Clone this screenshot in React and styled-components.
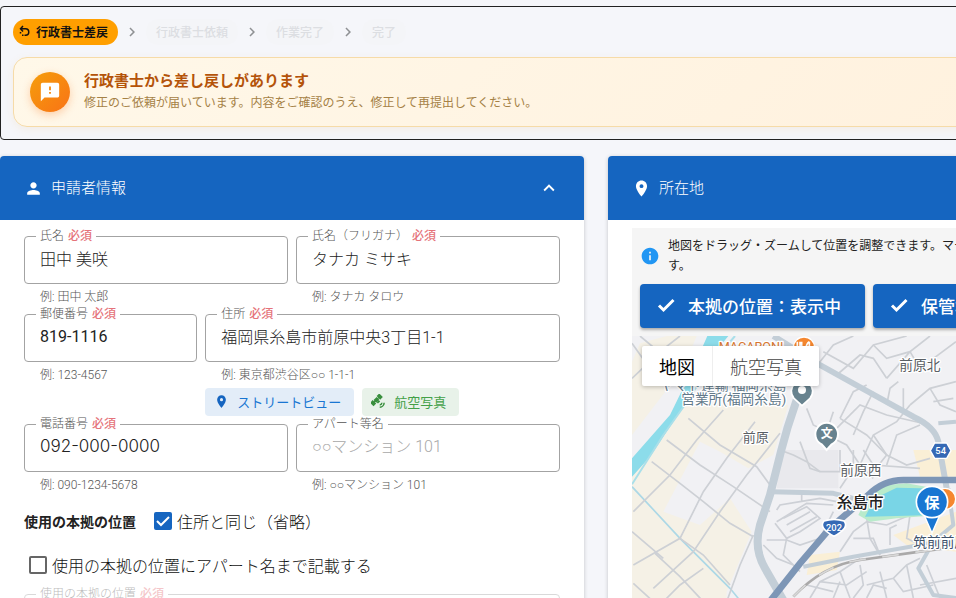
import React, { useState } from 'react'
import styled, { createGlobalStyle } from 'styled-components';
import { MdChevronRight, MdExpandLess, MdFeedback, MdInfo, MdPerson, MdPlace } from 'react-icons/md';

const GlobalStyle = createGlobalStyle`
  *{
    box-sizing:border-box;
  }
  html{
    scrollbar-width:none;
  }
  body{
    margin:0;
    background:#f5f6fa;
    color:#333;
    font-family:Roboto,"Liberation Sans","Noto Sans CJK JP",sans-serif;
    font-size:16px;
  }
  button,input,label{
    font-family:inherit;
  }
`
const Page = styled.main`
  min-width:1192px;
  padding-top:6px;
`
const StatusPanel = styled.section`
  border:1px solid #222;
  border-radius:4px;
  padding:12px;
`
const Steps = styled.ol`
  display:flex;
  align-items:center;
  gap:5px;
  margin:0 0 12px;
  padding:0;
  list-style:none;
`
const StepItem = styled.li`
  display:flex;
  align-items:center;
  gap:5px;
  color:#8f9194;
`
const Step = styled.span`
  display:flex;
  align-items:center;
  gap:6px;
  height:26px;
  padding:0 10px 2px ${props=>props.$active ? "6px" : "10px"};
  border-radius:13px;
  font-size:12px;
  font-weight:${props=>props.$active ? 700 : 500};
  color:${props=>props.$active ? "#111" : "#dcdee2"};
  background:${props=>props.$active ? "#ff9f00" : "#f4f5f8"};
`
const Alert = styled.div`
  display:flex;
  align-items:center;
  gap:14px;
  height:70px;
  padding:0 16px;
  border:1px solid #f6dba8;
  border-radius:14px;
  background:linear-gradient(135deg,#fff8e9,#fff0dc);
  box-shadow:0 3px 10px rgba(240,170,60,0.1);
`
const AlertIcon = styled.div`
  display:flex;
  align-items:center;
  justify-content:center;
  width:40px;
  height:40px;
  border-radius:50%;
  color:#fff;
  background:linear-gradient(135deg,#f59e0b,#f97316);
  box-shadow:0 3px 8px rgba(249,115,22,0.3);
`
const AlertBody = styled.div`
  padding-bottom:3px;
`
const AlertTitle = styled.h2`
  margin:0;
  font-size:15px;
  line-height:24px;
  font-weight:700;
  color:#b45309;
`
const AlertText = styled.p`
  margin:0;
  font-size:12px;
  line-height:20px;
  color:#a58145;
`
const Columns = styled.div`
  display:grid;
  grid-template-columns:repeat(2,minmax(0,1fr));
  align-items:start;
  gap:24px;
  margin-top:16px;
`
const Card = styled.section`
  border-radius:4px;
  background:#fff;
  box-shadow:0 1px 4px rgba(0,0,0,0.2);
`
const CardHeader = styled.header`
  display:flex;
  align-items:center;
  gap:8px;
  height:64px;
  padding:0 24px;
  border-radius:4px 4px 0 0;
  color:#fff;
  background:#1565c0;
`
const CardTitle = styled.h2`
  flex:1;
  margin:0;
  padding-bottom:3px;
  font-size:15px;
  font-weight:300;
`
const IconButton = styled.button`
  display:flex;
  padding:0;
  border:0;
  color:inherit;
  background:none;
`
const CardBody = styled.div`
  padding:8px 24px 24px;
`
const FieldGrid = styled.div`
  display:grid;
  grid-template-columns:repeat(12,minmax(0,1fr));
  column-gap:8px;
`
const FieldCell = styled.div`
  grid-column:span ${props=>props.$span};
`
const Outline = styled.fieldset`
  min-width:0;
  height:56px;
  margin:0;
  padding:0 15px;
  border:1px solid #a3a3a3;
  border-radius:4px;
  opacity:${props=>props.disabled ? 0.4 : 1};
`
const Legend = styled.legend`
  margin-left:-4px;
  padding:0 4px;
  height:16px;
  font-size:12px;
  line-height:16px;
  font-weight:300;
  color:#555;
`
const Required = styled.span`
  margin-left:4px;
  font-weight:500;
  color:#e5737a;
`
const Input = styled.input`
  display:block;
  width:100%;
  height:30px;
  padding:0 0 2px;
  border:0;
  outline:0;
  font-size:${props=>props.$wide ? "17px" : "16px"};
  font-weight:${props=>props.$regular ? 400 : 300};
  color:#222;
  background:none;
  ${props=>props.$wide && "font-family:Inter,sans-serif;"}
  &::placeholder{
    color:#a8a8a8;
    opacity:1;
  }
`
const Helper = styled.p`
  margin:0;
  padding:4px 16px 0;
  font-size:12px;
  line-height:18px;
  font-weight:300;
  color:#555;
`
const LinkRow = styled.div`
  display:flex;
  gap:8px;
  padding-top:4px;
`
const SoftButton = styled.button`
  display:flex;
  align-items:center;
  gap:8px;
  height:28px;
  padding:0 13px 2px 9px;
  border:0;
  border-radius:4px;
  font-size:13px;
  color:${props=>props.$green ? "#43a047" : "#1976d2"};
  background:${props=>props.$green ? "#e8f2e9" : "#e3edf8"};
  svg{
    color:${props=>props.$green ? "#388e3c" : "#1565c0"};
  }
`
const Options = styled.div`
  display:grid;
  gap:2px;
  padding-top:6px;
`
const OptionRow = styled.div`
  display:flex;
  align-items:center;
  gap:18px;
  height:42px;
`
const OptionTitle = styled.strong`
  font-size:14px;
  color:#222;
`
const CheckLabel = styled.label`
  display:flex;
  align-items:center;
  gap:5px;
  padding-left:${props=>props.$indent ? "5px" : 0};
  font-weight:300;
  color:#111;
`
const Checkbox = styled.input`
  appearance:none;
  width:18px;
  height:18px;
  margin:0;
  border:2px solid #666;
  border-radius:2px;
  &:checked{
    border-color:#1565c0;
    background:#1565c0 url("data:image/svg+xml,%3Csvg xmlns='http://www.w3.org/2000/svg' viewBox='0 0 14 14'%3E%3Cpath d='M1 7l4 4 8-8' fill='none' stroke='white' stroke-width='2'/%3E%3C/svg%3E") center / 14px no-repeat;
  }
`
const MapPanel = styled.div`
  background:#f5f5f5;
`
const Notice = styled.div`
  display:flex;
  align-items:center;
  gap:8px;
  padding:8px;
  svg{
    flex:none;
    color:#2196f3;
  }
`
const NoticeText = styled.p`
  margin:0;
  font-size:12px;
  line-height:20px;
  color:#222;
`
const MapActions = styled.div`
  display:flex;
  gap:8px;
  padding:0 8px 8px;
`
const PrimaryButton = styled.button`
  display:flex;
  align-items:center;
  gap:13px;
  height:44px;
  padding:0 24px 2px 17px;
  border:0;
  border-radius:4px;
  font-size:17px;
  font-weight:500;
  white-space:nowrap;
  color:#fff;
  background:#1565c0;
  box-shadow:0 2px 3px rgba(0,0,0,0.3);
`
const MapView = styled.div`
  position:relative;
  height:400px;
  overflow:hidden;
  background:#f1f1f4;
`
const MapDrawing = styled.svg`
  display:block;
  width:100%;
  height:100%;
`
const MapTypes = styled.div`
  position:absolute;
  top:10px;
  left:10px;
  display:flex;
  height:40px;
  border-radius:2px;
  background:#fff;
  box-shadow:0 1px 4px rgba(0,0,0,0.25);
`
const MapTypeButton = styled.button`
  padding:0 17px;
  border:0;
  border-left:${props=>props.$active ? 0 : "1px solid #eee"};
  font-size:18px;
  font-weight:${props=>props.$active ? 400 : 300};
  color:${props=>props.$active ? "#000" : "#444"};
  background:none;
`

const steps = ["行政書士差戻","行政書士依頼","作業完了","完了"]

function UndoIcon() {
  return (
    <svg width="11" height="12" viewBox="0 0 22 24" fill="none" stroke="currentColor" strokeWidth="3">
      <path d="M8 2L3 7.500L8 13M3 7.500H13A6.500 6.500 0 0 1 13 20.500H11"/>
      <path d="M9 20.500H6M3 17V14" />
    </svg>
  )
}

function CheckIcon() {
  return (
    <svg width="18" height="18" viewBox="0 0 18 18" fill="none" stroke="currentColor" strokeWidth="3">
      <path d="M2 9.500L6.500 14L16.500 4"/>
    </svg>
  )
}

function SatelliteIcon() {
  return (
    <svg width="15" height="15" viewBox="0 0 24 24" fill="currentColor">
      <g transform="rotate(45 9 9)">
        <rect x="5" y="-1" width="8" height="6"/>
        <rect x="6" y="6" width="6" height="7"/>
        <rect x="5" y="14" width="8" height="6"/>
        <path d="M8 4h2v11h-2zM12 7h3v5h-3z"/>
      </g>
      <path d="M14 21A7 7 0 0 0 21 14M14 17.500A4 4 0 0 0 17.500 14" fill="none" stroke="currentColor" strokeWidth="2.400"/>
    </svg>
  )
}

function Field({id,label,required,helper,span,wide,regular,...rest}) {
  return (
    <FieldCell $span={span}>
      <Outline disabled={rest.disabled}>
        <Legend>
          <label htmlFor={id}>{label}</label>
          {required && <Required>必須</Required>}
        </Legend>
        <Input id={id} $wide={wide} $regular={regular} {...rest}/>
      </Outline>
      {helper && <Helper>{helper}</Helper>}
    </FieldCell>
  )
}

function MapLabel({x,y,size = 39,color = "#5b6065",anchor = "start",weight = 400,children}) {
  return (
    <text x={x} y={y} fontSize={size} fill={color} textAnchor={anchor} fontWeight={weight}
      stroke="#fff" strokeWidth="8" strokeLinejoin="round" paintOrder="stroke">
      {children}
    </text>
  )
}

function CityMap() {
  return (
    <MapDrawing viewBox="36 33 1608 1200" preserveAspectRatio="xMinYMin slice" role="img" aria-label="糸島市の地図">
      {/* farmland and blocks */}
      <g fill="#f5f1e6">
        <path d="M36 110L60 55L140 33H230L190 130L36 330z"/>
        <path d="M190 240H505L460 390L385 430L300 380L240 350L130 560L240 600L330 520L395 620L320 800L300 1233H36V480z"/>
      </g>
      <path d="M36 440L120 340L180 410L100 520L36 480z" fill="#f5f1e6"/>
      <path d="M485 375H655V490H470z" fill="#e9e9ed"/>
      <g fill="#faefd6">
        <path d="M820 630L1008 560V680L860 660z"/>
        <path d="M570 690L660 680L650 735L560 750z"/>
        <path d="M880 375H1008V455H900z"/>
      </g>
      {/* river */}
      <path d="M262 33L228 110L150 270L36 400V455L90 395L190 245L262 110L325 33z" fill="#8cdcea"/>
      <path d="M345 33L270 120L205 225L130 330L36 478" fill="none" stroke="#a9dfe9" strokeWidth="6"/>
      <path d="M36 485L180 640L330 790L420 900" fill="none" stroke="#acd8e6" strokeWidth="5"/>
      {/* small streets */}
      <g fill="none" stroke="#cdd0d5" strokeWidth="5">
        <path d="M36 160L120 80L180 33M60 33L200 150M36 55L110 160"/>
        <path d="M95 410L180 475L250 530L330 595L400 635"/>
        <path d="M140 345L240 420L340 485L450 560"/>
        <path d="M205 280L300 360L410 425L450 480"/>
        <path d="M310 255L230 345L150 450L40 560"/>
        <path d="M405 290L320 400L250 500L180 640L40 720"/>
        <path d="M480 325L380 450L300 560L220 680L100 790"/>
        <path d="M400 630L360 720L320 830"/>
        <path d="M105 685L180 755L250 830M40 775L100 830M36 620L130 700M250 730L180 780L130 830"/>
        <path d="M180 640L250 690L330 780"/>
        <path d="M560 250L580 300L620 320L640 260M540 350L570 430L600 440H660V375"/>
        <path d="M600 110L640 60L700 33M610 80L700 130L760 60L860 33M650 150L720 90L760 100L800 160"/>
        <path d="M760 60L800 100L870 80L930 33M800 160L870 80L900 130L1008 50M870 240L930 190L1008 170"/>
        <path d="M660 280L700 200L740 180M640 320L720 240L800 270L930 300M700 330L730 260L760 200"/>
        <path d="M660 280L740 330L800 390L860 420L930 400M720 420L760 330L830 290L870 240"/>
        <path d="M800 420L830 330L900 300M760 440L800 390L760 330M620 330L680 360L720 420L760 460"/>
        <path d="M800 240L810 190L835 170M850 190V250M930 190L960 240L1008 260M940 230L1000 220"/>
        <path d="M480 375L520 390L560 410L600 440M700 375V430L660 490M730 375L760 420L900 430"/>
      </g>
      <g fill="none" stroke="#cdd0d6" strokeWidth="5">
        <path d="M470 555L480 540L540 530L600 520L650 530M470 590L560 535L640 540M545 500V530"/>
        <path d="M465 595L500 640L540 620L600 580L560 545L490 580M500 600L570 560M510 620L590 575"/>
        <path d="M440 645H500L540 660L600 640L640 560M500 640L490 690L540 740M430 660L470 700L520 720"/>
        <path d="M600 640L660 590L700 560M660 680L700 620L740 590M740 580L750 640L780 690M740 590L800 600L870 570"/>
        <path d="M810 660V610L830 600M870 570L860 640L900 660M780 690L760 640L700 640"/>
        <path d="M570 819L600 770L660 740L720 700M600 770L680 780L740 740M660 740L690 819M720 720L730 780L700 819"/>
        <path d="M740 780L820 760L860 720L900 700M780 740L800 819M860 720L880 819M820 760L850 800L940 780"/>
        <path d="M640 819L660 770M740 819L760 780L800 790M560 780L640 800M900 780L1008 760M920 720L960 819"/>
      </g>
      {/* wide roads */}
      <g fill="none" stroke="#c3ced7" strokeLinejoin="round">
        <path d="M530 225L502 310L484 375L450 510L420 600Q400 670 435 730L510 860" strokeWidth="24"/>
        <path d="M460 33L600 120L730 192L880 275Q945 305 955 350L980 490" strokeWidth="18"/>
        <path d="M455 500L640 505L700 520" strokeWidth="15"/>
        <path d="M550 725L700 695L900 660L1008 640" strokeWidth="12"/>
        <path d="M955 295L1008 290" strokeWidth="12"/>
        <path d="M985 490L1000 600L940 650L895 730L940 810L1008 819" strokeWidth="12"/>
      </g>
      {/* railway */}
      <path d="M520 815Q610 720 720 705L900 680L1200 640" fill="none" stroke="#aaa9a9" strokeWidth="8"/>
      <path d="M520 815Q610 720 720 705L900 680L1200 640" fill="none" stroke="#d8d8d8" strokeWidth="5" strokeDasharray="50 50"/>
      {/* pond */}
      <path d="M715 570L745 510L800 480L860 475L1000 500L960 570L830 580L750 590z" fill="#b9ebcb"/>
      <path d="M735 575L765 520L830 488L900 490L990 500L940 570L830 573z" fill="#79d5e6"/>
      <path d="M445 835L540 715L630 610L745 510Q790 465 850 465H1200" fill="none" stroke="#7d96b6" strokeWidth="20"/>

      <MapLabel x="296" y="77" size="38" color="#d9772f">MACARONI</MapLabel>
      <circle cx="552" cy="68" r="32" fill="#f5872f" stroke="#fff" strokeWidth="4"/>
      <path d="M540 50V66H550V88M545 50V66M532 50V66H540M568 50V88M568 50Q558 56 558 72H568" fill="none" stroke="#fff" strokeWidth="5"/>
      <MapLabel x="499" y="194" size="41" anchor="end" color="#62798a">ヤマト運輸 福岡糸島</MapLabel>
      <MapLabel x="499" y="237" size="41" anchor="end" color="#62798a">営業所(福岡糸島)</MapLabel>
      <path d="M546 242L522 220A32 32 0 1 1 570 220z" fill="#68838f" stroke="#fff" strokeWidth="5"/>
      <circle cx="546" cy="195" r="12" fill="#fff"/>
      <path d="M620 375L605 358A34 34 0 1 1 635 358z" fill="#68838f" stroke="#fff" strokeWidth="6"/>
      <text x="620" y="339" fontSize="36" fontWeight="700" textAnchor="middle" fill="#fff">文</text>
      <MapLabel x="838" y="136" size="41">前原北</MapLabel>
      <MapLabel x="368" y="352" size="39">前原</MapLabel>
      <MapLabel x="661" y="449" size="41">前原西</MapLabel>
      <MapLabel x="650" y="550" size="47" color="#222" weight="500">糸島市</MapLabel>
      <path d="M944 354H980L993 377L980 400H944L931 377z" fill="#3569b5" stroke="#fff" strokeWidth="4"/>
      <text x="962" y="387" fontSize="28" fontWeight="500" textAnchor="middle" fill="#fff">54</text>
      <path d="M612 588Q642 578 672 588Q690 608 642 634Q594 608 612 588z" fill="#3569b5" stroke="#fff" strokeWidth="5"/>
      <text x="642" y="617" fontSize="28" fontWeight="500" textAnchor="middle" fill="#fff">202</text>
      <circle cx="975" cy="522" r="32" fill="#f5872f" stroke="#fff" strokeWidth="4"/>
      <MapLabel x="880" y="667" size="41" color="#41536b">筑前前原</MapLabel>
      <path d="M914 574H958L936 624z" fill="#1976d2" stroke="#fff" strokeWidth="4"/>
      <circle cx="936" cy="531" r="47" fill="#1976d2" stroke="#fff" strokeWidth="5"/>
      <text x="936" y="548" fontSize="46" fontWeight="700" textAnchor="middle" fill="#fff">保</text>
    </MapDrawing>
  )
}

function App() {
  const [sameAddress,setSameAddress] = useState(true);
  const [withApartment,setWithApartment] = useState(false);
  return (
    <>
      <GlobalStyle/>
      <Page>
        <StatusPanel>
          <Steps>
            {steps.map((step,index)=>{
              return(
                <StepItem key={step}>
                  {index > 0 && <MdChevronRight size={18}/>}
                  <Step $active={index === 0}>
                    {index === 0 && <UndoIcon/>}
                    {step}
                  </Step>
                </StepItem>
              )
            })}
          </Steps>
          <Alert role="alert">
            <AlertIcon><MdFeedback size={22}/></AlertIcon>
            <AlertBody>
              <AlertTitle>行政書士から差し戻しがあります</AlertTitle>
              <AlertText>修正のご依頼が届いています。内容をご確認のうえ、修正して再提出してください。</AlertText>
            </AlertBody>
          </Alert>
        </StatusPanel>
        <Columns>
          <Card>
            <CardHeader>
              <MdPerson size={19}/>
              <CardTitle>申請者情報</CardTitle>
              <IconButton aria-label="閉じる"><MdExpandLess size={22}/></IconButton>
            </CardHeader>
            <CardBody>
              <FieldGrid>
                <Field id="name" label="氏名" required span={6} defaultValue="田中 美咲" helper="例: 田中 太郎"/>
                <Field id="kana" label="氏名（フリガナ）" required span={6} defaultValue="タナカ ミサキ" helper="例: タナカ タロウ"/>
                <Field id="zip" label="郵便番号" required regular span={4} defaultValue="819-1116" helper="例: 123-4567"/>
                <FieldCell $span={8}>
                  <Field id="address" label="住所" required defaultValue="福岡県糸島市前原中央3丁目1-1" helper="例: 東京都渋谷区○○ 1-1-1"/>
                  <LinkRow>
                    <SoftButton><MdPlace size={15}/>ストリートビュー</SoftButton>
                    <SoftButton $green><SatelliteIcon/>航空写真</SoftButton>
                  </LinkRow>
                </FieldCell>
                <Field id="tel" label="電話番号" required wide span={6} defaultValue="092-000-0000" helper="例: 090-1234-5678"/>
                <Field id="apartment" label="アパート等名" span={6} placeholder="○○マンション 101" helper="例: ○○マンション 101"/>
              </FieldGrid>
              <Options>
                <OptionRow>
                  <OptionTitle>使用の本拠の位置</OptionTitle>
                  <CheckLabel>
                    <Checkbox type="checkbox" checked={sameAddress} onChange={()=>setSameAddress(!sameAddress)}/>
                    住所と同じ（省略）
                  </CheckLabel>
                </OptionRow>
                <OptionRow>
                  <CheckLabel $indent>
                    <Checkbox type="checkbox" checked={withApartment} onChange={()=>setWithApartment(!withApartment)}/>
                    使用の本拠の位置にアパート名まで記載する
                  </CheckLabel>
                </OptionRow>
              </Options>
              <FieldGrid>
                <Field id="base" label="使用の本拠の位置" required span={12} disabled={sameAddress}/>
              </FieldGrid>
            </CardBody>
          </Card>
          <Card>
            <CardHeader>
              <MdPlace size={19}/>
              <CardTitle>所在地</CardTitle>
            </CardHeader>
            <CardBody>
              <MapPanel>
                <Notice>
                  <MdInfo size={20}/>
                  <NoticeText>地図をドラッグ・ズームして位置を調整できます。マーカーはドラッグでの移動が可能です。</NoticeText>
                </Notice>
                <MapActions>
                  <PrimaryButton><CheckIcon/>本拠の位置：表示中</PrimaryButton>
                  <PrimaryButton><CheckIcon/>保管場所：表示中</PrimaryButton>
                </MapActions>
                <MapView>
                  <CityMap/>
                  <MapTypes>
                    <MapTypeButton $active>地図</MapTypeButton>
                    <MapTypeButton>航空写真</MapTypeButton>
                  </MapTypes>
                </MapView>
              </MapPanel>
            </CardBody>
          </Card>
        </Columns>
      </Page>
    </>
  )
}

export default App
